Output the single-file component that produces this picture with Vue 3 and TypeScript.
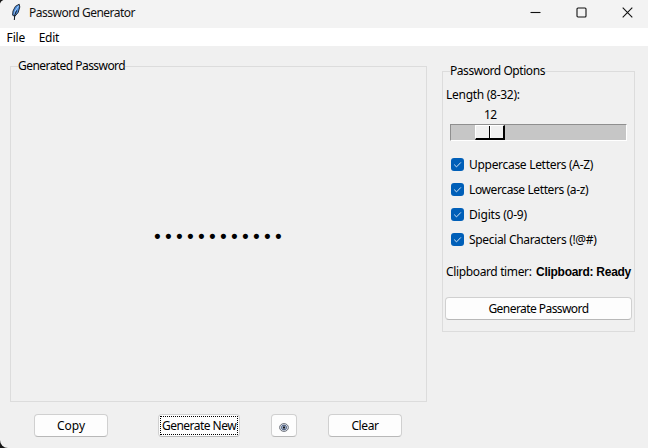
<script setup lang="ts">
import { ref } from 'vue'

interface CharOption {
  label: string
  cls: string
  on: boolean
}

const length = ref(12)
const options = ref<CharOption[]>([
  { label: 'Uppercase Letters (A-Z)', cls: 'upper', on: true },
  { label: 'Lowercase Letters (a-z)', cls: 'lower', on: true },
  { label: 'Digits (0-9)', cls: 'digits', on: true },
  { label: 'Special Characters (!@#)', cls: 'special', on: true },
])
</script>

<template>
  <div class="backdrop">
    <div class="window">
      <header class="titlebar">
        <svg class="feather" width="12" height="18" viewBox="0 0 12 18">
          <path d="M9.2 1.2 5.4 3.4 3 8 2.6 12.2 4.8 13.4 8.2 9.4 9.8 4Z" fill="#4d8fe0" stroke="#222b38" stroke-width="1" />
          <path d="M8.6 2.8 5.2 8 4.6 12" fill="none" stroke="#a9d0fb" stroke-width="1" />
          <path d="M6.6 7.5 4.8 11.8 4.3 17" fill="none" stroke="#10151c" stroke-width="1" />
        </svg>
        <h1 class="title">Password Generator</h1>
        <div class="controls">
          <svg width="11" height="11" viewBox="0 0 11 11"><path d="M0.5 5.5H10.5" /></svg>
          <svg width="11" height="11" viewBox="0 0 11 11"><rect x="1" y="1" width="9" height="9" rx="1" /></svg>
          <svg width="11" height="11" viewBox="0 0 11 11"><path d="M.7 .7 10.3 10.3M10.3 .7 .7 10.3" /></svg>
        </div>
      </header>
      <nav class="menubar">
        <span class="file">File</span>
        <span class="edit">Edit</span>
      </nav>
      <main class="content">
        <section class="left">
          <fieldset class="group output">
            <legend class="l-generated">Generated Password</legend>
            <div class="password">{{ '•'.repeat(length) }}</div>
          </fieldset>
          <div class="actions">
            <button class="btn copy">Copy</button>
            <button class="btn fresh"><span class="focus">Generate New</span></button>
            <button class="btn reveal">
              <svg width="10" height="9" viewBox="0 0 10 9">
                <ellipse cx="5" cy="4.5" rx="4.4" ry="3.9" fill="#dfe6ee" stroke="#5d626c" stroke-width=".9" />
                <ellipse cx="5" cy="4.5" rx="2.5" ry="2.3" fill="#cfe0f2" stroke="#33436b" stroke-width=".9" />
                <circle cx="5" cy="4.5" r="1.2" fill="#10131a" />
              </svg>
            </button>
            <button class="btn clear">Clear</button>
          </div>
        </section>
        <fieldset class="group options">
          <legend class="l-options">Password Options</legend>
          <div class="length">Length (8-32):</div>
          <div class="value">{{ length }}</div>
          <div class="trough"><div class="thumb"><i></i><i></i></div></div>
          <div class="checks">
            <label v-for="o in options" :key="o.label" class="check">
              <span class="box">
                <svg v-if="o.on" width="13" height="13" viewBox="0 0 13 13"><path d="M3.2 6.6 5.5 8.9 9.9 4.4" /></svg>
              </span>
              <span class="caption" :class="o.cls">{{ o.label }}</span>
            </label>
          </div>
          <div class="timer"><span class="timer-label">Clipboard timer:</span><b>Clipboard: Ready</b></div>
          <button class="btn generate">Generate Password</button>
        </fieldset>
      </main>
    </div>
  </div>
</template>

<style>
body { margin: 0; }
</style>

<style scoped>
* { box-sizing: border-box; }
.backdrop { width: 648px; height: 448px; background: #161616; overflow: hidden; }
.window {
  width: 648px; height: 448px; display: flex; flex-direction: column;
  background: #f0f0f0; border-radius: 5px 0 0 8px; overflow: hidden;
  font: 12px/16px "Noto Sans", "Open Sans", sans-serif; color: #000;
  white-space: nowrap;
}
.titlebar { height: 28px; flex: none; display: flex; align-items: flex-start; background: #f3f3f3; padding-left: 10px; }
.feather { margin-top: 3px; flex: none; }
.title { margin: 5px 0 0 7px; font: inherit; letter-spacing: -.5px; color: #111; }
.controls { margin-left: auto; padding: 7px 15px 0 0; display: flex; gap: 35px; }
.controls svg { fill: none; stroke: #111; stroke-width: 1.1; }
.menubar { height: 18px; flex: none; display: flex; gap: 13.5px; padding: 2px 0 0 6.6px; background: #fff; }
.file { letter-spacing: -.15px; }
.edit { letter-spacing: -.3px; }
.content { flex: 1; display: flex; align-items: flex-start; padding: 12px 13px 0 10px; gap: 15px; }
.left { width: 417px; flex: none; }
.group { margin: 0; min-width: 0; border: 1px solid #dcdcdc; }
legend { height: 16px; }
.output { height: 344px; padding: 0 0 0 7px; }
.l-generated { padding: 0; letter-spacing: -.55px; }
.password {
  height: 327px; padding-right: 8px; display: flex; align-items: center; justify-content: center;
  font: bold 18px/20px "Liberation Mono", monospace; letter-spacing: .2px;
}
.actions { display: flex; padding: 12px 0 0 24px; }
.btn {
  height: 23px; padding: 0; display: flex; align-items: center; justify-content: center;
  border: 1px solid #d0d0d0; border-bottom-color: #b8b8b8; border-radius: 4px;
  background: #fdfdfd; font: inherit; color: #000;
}
.copy { width: 74px; }
.fresh { width: 82px; margin-left: 50px; }
.focus { width: 78px; height: 19px; border: 1px dotted #000; line-height: 17px; text-align: center; letter-spacing: -.53px; }
.reveal { width: 26px; margin-left: 31px; padding-top: 4px; }
.clear { width: 74px; margin-left: 31px; letter-spacing: -.4px; }
.options { width: 193px; height: 269px; margin-top: 5px; padding: 0 2px; }
.l-options { margin-left: 5px; padding: 0; letter-spacing: -.44px; }
.length { margin: 8px 0 0 1px; letter-spacing: -.28px; }
.value { margin: 4px 0 0 39px; letter-spacing: -.5px; }
.trough {
  width: 177px; height: 17px; margin: 1px 0 0 5px; padding-left: 24px;
  background: #c6c6c6; border: 1px solid #8f8f8f; border-right-color: #fff; border-bottom-color: #fff;
}
.thumb { width: 30px; height: 15px; display: flex; background: #f0f0f0; border: 1px solid #fff; border-right: 2px solid #000; border-bottom: 2px solid #000; }
.thumb i { flex: 1; }
.thumb i:first-child { flex: 0 0 14px; border-right: 1px solid #000; }
.thumb i:last-child { border-left: 1px solid #fff; }
.checks { margin: 15px 0 0 6px; }
.check { height: 25px; display: flex; align-items: flex-start; gap: 5px; }
.box { width: 13px; height: 13px; margin-top: 2px; display: flex; background: #005fb8; border-radius: 3px; }
.box path { fill: none; stroke: #d4e5f4; stroke-width: 1; }
.caption { margin-top: 1px; }
.upper { letter-spacing: -.3px; }
.lower { letter-spacing: -.39px; }
.digits { letter-spacing: -.2px; }
.special { letter-spacing: -.33px; }
.timer { margin: 8px 0 0 1px; display: flex; align-items: baseline; }
.timer-label { width: 90px; letter-spacing: -.36px; }
.timer b { font: bold 12px/16px "Liberation Sans", Arial, sans-serif; letter-spacing: -.27px; }
.generate { width: 187px; margin-top: 17px; letter-spacing: -.56px; }
</style>
